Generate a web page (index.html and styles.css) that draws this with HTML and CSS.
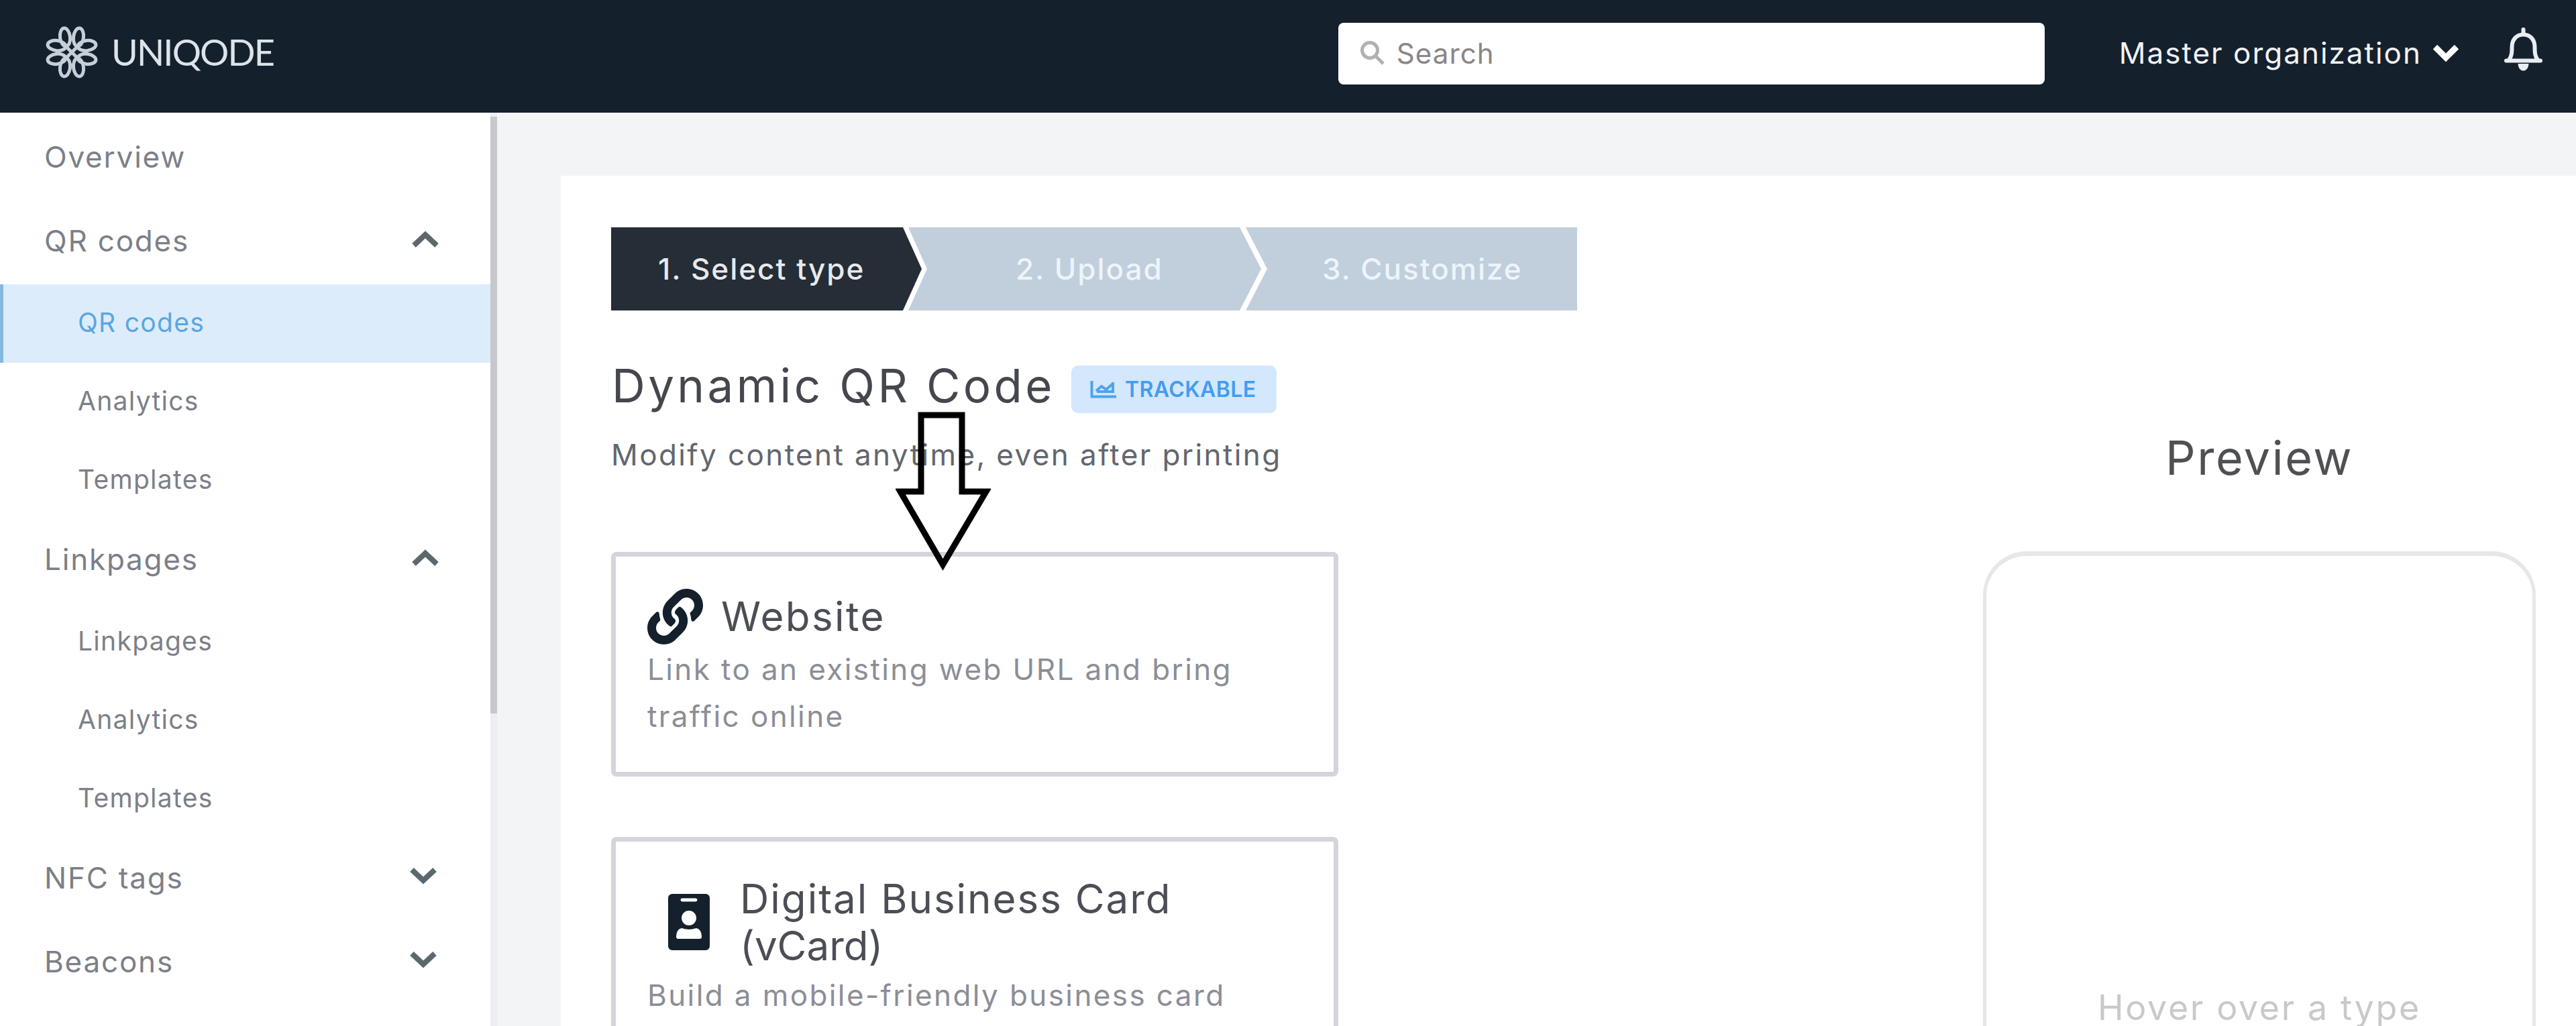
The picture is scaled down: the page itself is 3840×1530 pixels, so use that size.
FILE: index.html
```html
<!DOCTYPE html>
<html lang="en">
<head>
<meta charset="utf-8">
<title>Uniqode</title>
<link rel="stylesheet" href="styles.css">
</head>
<body>
<svg class="defs" aria-hidden="true">
  <symbol id="chevron-up" viewBox="0 0 42 28"><path d="M4 24 21 8l17 16"/></symbol>
  <symbol id="chevron-down" viewBox="0 0 42 28"><path d="M4 5l17 16L38 5"/></symbol>
</svg>

<header class="topbar">
  <a class="brand">
    <svg class="brand-mark" viewBox="-39 -39 78 78">
      <g id="petals">
        <ellipse cx="10" cy="-22.500" rx="7.500" ry="13.500" transform="rotate(7 10 -22.500)"/>
        <ellipse cx="-10" cy="-22.500" rx="7.500" ry="13.500" transform="rotate(-7 -10 -22.500)"/>
        <ellipse cx="10" cy="22.500" rx="7.500" ry="13.500" transform="rotate(-7 10 22.500)"/>
        <ellipse cx="-10" cy="22.500" rx="7.500" ry="13.500" transform="rotate(7 -10 22.500)"/>
      </g>
      <use href="#petals" transform="rotate(90)"/>
      <path d="M-12-12 12 12M-12 12 12-12"/>
    </svg>
    <span class="brand-name">UNIQODE</span>
  </a>
  <div class="search">
    <svg class="search-icon" viewBox="0 0 38 38"><circle cx="15" cy="15" r="11.5"/><path d="M23.500 23.500 35 35"/></svg>
    <span>Search</span>
  </div>
  <div class="org">
    <span>Master organization</span>
    <svg class="org-chevron" viewBox="0 0 40 28"><path d="M4 5l16 16L36 5"/></svg>
  </div>
  <svg class="bell" viewBox="0 0 57 66">
    <path class="bell-line" d="M7 48.500C11 43 11.500 38 11.500 29 11.500 18 18.500 10.500 28.500 10.500S45.500 18 45.500 29c0 9 .5 14 4.500 19.500"/>
    <path class="bell-line" d="M3 49.500h51M28.500 3v7"/>
    <path class="bell-fill" d="M20.500 54h16a8 10.500 0 0 1-16 0z"/>
  </svg>
</header>

<div class="shell">
  <nav class="sidebar">
    <a class="item">Overview</a>
    <a class="item">QR codes<svg class="chevron"><use href="#chevron-up"/></svg></a>
    <a class="sub active">QR codes</a>
    <a class="sub">Analytics</a>
    <a class="sub">Templates</a>
    <a class="item short">Linkpages<svg class="chevron"><use href="#chevron-up"/></svg></a>
    <a class="sub">Linkpages</a>
    <a class="sub">Analytics</a>
    <a class="sub">Templates</a>
    <a class="item short">NFC tags<svg class="chevron down"><use href="#chevron-down"/></svg></a>
    <a class="item">Beacons<svg class="chevron down"><use href="#chevron-down"/></svg></a>
  </nav>
  <div class="scrollbar"><div class="thumb"></div></div>

  <main class="panel">
    <section class="types">
      <div class="steps">
        <div class="step current">1. Select type</div>
        <div class="step second">2. Upload</div>
        <div class="step third">3. Customize</div>
      </div>

      <div class="heading">
        <h1>Dynamic QR Code</h1>
        <span class="badge">
          <svg class="badge-icon" viewBox="0 0 40 28"><path d="M2.500 1v23.500H39"/><path d="M9 16l8-7 7 5 11-10M34 3v14H10"/></svg>
          TRACKABLE
        </span>
      </div>
      <p class="lead">Modify content anytime, even after printing</p>

      <article class="card website">
        <div class="card-head">
          <svg class="link-icon" viewBox="0 0 512 512"><path d="M326.612 185.391c59.747 59.809 58.927 155.698.36 214.59-.11.12-.24.25-.36.37l-67.200 67.200c-59.270 59.270-155.699 59.262-214.960 0-59.270-59.260-59.270-155.700 0-214.960l37.106-37.106c9.840-9.840 26.786-3.300 27.294 10.606.648 17.722 3.826 35.527 9.690 52.721 1.986 5.822.567 12.262-3.783 16.612l-13.087 13.087c-28.026 28.026-28.905 73.660-1.155 101.960 28.024 28.579 74.086 28.749 102.325.51l67.200-67.190c28.191-28.191 28.073-73.757 0-101.830-3.701-3.694-7.429-6.564-10.341-8.569a16.037 16.037 0 0 1-6.947-12.606c-.396-10.567 3.348-21.456 11.698-29.806l21.054-21.055c5.521-5.521 14.182-6.199 20.584-1.731a152.482 152.482 0 0 1 20.522 17.197zM467.547 44.449c-59.261-59.262-155.690-59.270-214.960 0l-67.200 67.200c-.12.12-.25.25-.36.37-58.566 58.892-59.387 154.781.36 214.590a152.454 152.454 0 0 0 20.521 17.196c6.402 4.468 15.064 3.789 20.584-1.731l21.054-21.055c8.350-8.350 12.094-19.239 11.698-29.806a16.037 16.037 0 0 0-6.947-12.606c-2.912-2.005-6.640-4.875-10.341-8.569-28.073-28.073-28.191-73.639 0-101.830l67.200-67.190c28.239-28.239 74.300-28.069 102.325.51 27.750 28.300 26.872 73.934-1.155 101.960l-13.087 13.087c-4.350 4.350-5.769 10.790-3.783 16.612 5.864 17.194 9.042 34.999 9.690 52.721.509 13.906 17.454 20.446 27.294 10.606l37.106-37.106c59.271-59.259 59.271-155.699.001-214.959z"/></svg>
          <h2>Website</h2>
        </div>
        <p>Link to an existing web URL and bring<br>traffic online</p>
      </article>

      <article class="card vcard">
        <div class="card-head">
          <svg class="vcard-icon" viewBox="0 0 62 84">
            <path fill-rule="evenodd" d="M6 0h50a6 6 0 0 1 6 6v72a6 6 0 0 1-6 6H6a6 6 0 0 1-6-6V6a6 6 0 0 1 6-6zM21 6.500a2.500 2.500 0 0 0 0 5h20a2.500 2.500 0 0 0 0-5zM31 25a11 11 0 1 0 0 22 11 11 0 0 0 0-22zM20 51q-8 2-8 13 0 3 3 3h32q3 0 3-3 0-11-8-13-11 4-22 0z"/>
          </svg>
          <h2>Digital Business Card<br><span class="tight">(vCard)</span></h2>
        </div>
        <p>Build a mobile-friendly business card</p>
      </article>

      <svg class="pointer" viewBox="0 0 142 240">
        <path d="M38 5h61v114h36L70.500 228 7 119h31z"/>
      </svg>
    </section>

    <aside class="preview">
      <h2>Preview</h2>
      <div class="phone">Hover over a type</div>
    </aside>
  </main>
</div>
</body>
</html>
```
FILE: styles.css
```css
* { box-sizing: border-box; }

body {
  margin: 0;
  width: 3840px;
  height: 1530px;
  overflow: hidden;
  background: #f3f4f6;
  font-family: Inter, "Liberation Sans", sans-serif;
  font-size: 44px;
}

h1, h2, p { margin: 0; font-weight: 400; }
.defs { display: none; }

/* Top bar */
.topbar {
  display: flex;
  align-items: center;
  height: 168px;
  padding: 0 50px 8px 68px;
  background: #15202d;
  color: #f0f3f7;
}
.brand { display: flex; align-items: center; gap: 20px; }
.brand-mark {
  width: 78px;
  height: 78px;
  margin-bottom: 4px;
  fill: none;
  stroke: #c6ced8;
  stroke-width: 5;
}
.brand-name {
  margin-bottom: 4px;
  font-family: Lato, Inter, sans-serif;
  font-size: 54px;
  line-height: 64px;
  letter-spacing: -1.8px;
  color: #dde3ea;
}
.search {
  display: flex;
  align-items: center;
  gap: 17px;
  width: 1053px;
  height: 92px;
  margin-left: auto;
  padding: 0 0 2px 32px;
  border-radius: 8px;
  background: #fff;
  color: #8a8686;
  font-size: 42px;
  letter-spacing: 1.1px;
}
.search-icon { width: 38px; height: 38px; fill: none; stroke: #b3b0b3; stroke-width: 5; }
.org {
  display: flex;
  align-items: center;
  gap: 16px;
  margin: 0 0 3px 111px;
  letter-spacing: 2px;
}
.org-chevron { width: 40px; height: 28px; fill: none; stroke: #fff; stroke-width: 9; }
.bell { width: 57px; height: 66px; margin: 0 0 12px 67px; }
.bell-line { fill: none; stroke: #e8edf3; stroke-width: 6; stroke-linecap: round; }
.bell-fill { fill: #e8edf3; }

.shell { display: flex; align-items: flex-start; height: 1362px; }

/* Sidebar */
.sidebar {
  width: 731px;
  height: 1362px;
  padding-top: 6px;
  background: #fff;
  color: #7c7f88;
}
.item {
  display: flex;
  align-items: center;
  justify-content: space-between;
  height: 125px;
  padding: 0 76px 5px 66px;
  letter-spacing: 1.8px;
}
.item.short { height: 124px; padding-bottom: 6px; }
.sub {
  display: flex;
  align-items: center;
  height: 117px;
  padding: 0 0 5px 116px;
  font-size: 39px;
  letter-spacing: 1.3px;
}
.sub.active {
  padding-left: 111px;
  border-left: 5px solid #85b8dc;
  background: #dcecfb;
  color: #5aa6e2;
}
.chevron {
  width: 42px;
  height: 28px;
  margin-bottom: 6px;
  fill: none;
  stroke: #5c686e;
  stroke-width: 8;
}
.chevron.down { margin-right: 3px; }
.scrollbar { width: 10px; height: 1362px; padding-top: 6px; background: #edeef1; }
.thumb { height: 890px; background: #c6c8cd; }

/* Main panel */
.panel {
  display: flex;
  justify-content: space-between;
  flex: 1;
  height: 1268px;
  margin: 94px 0 0 95px;
  padding: 77px 60px 0 75px;
  background: #fff;
}
.types { position: relative; width: 1440px; }

.steps {
  display: flex;
  height: 124px;
  color: #edf4fb;
  font-weight: 500;
  letter-spacing: 2px;
}
.step { display: flex; align-items: center; background: #c1cedc; }
.step.current {
  width: 463px;
  padding-left: 70px;
  background: #252d36;
  color: #e6e9ec;
  clip-path: polygon(0 0, 435px 0, 100% 50%, 435px 100%, 0 100%);
}
.step.second {
  width: 529px;
  margin-left: -20px;
  padding-left: 160px;
  clip-path: polygon(0 0, 494px 0, 526px 50%, 494px 100%, 0 100%, 28px 50%);
}
.step.third {
  width: 494px;
  margin-left: -26px;
  padding-left: 114px;
  clip-path: polygon(0 0, 100% 0, 100% 100%, 0 100%, 32px 50%);
}

.heading {
  display: flex;
  align-items: flex-start;
  height: 72px;
  margin-top: 82px;
}
h1 {
  width: 686px;
  padding-left: 1px;
  color: #44474d;
  font-size: 69px;
  line-height: 60px;
  letter-spacing: 4.4px;
  white-space: nowrap;
}
.badge {
  display: flex;
  align-items: center;
  gap: 12px;
  width: 306px;
  height: 71px;
  padding-left: 28px;
  border-radius: 10px;
  background: #d3e8fc;
  color: #459cf0;
  font-size: 32px;
  font-weight: 600;
  letter-spacing: 0.4px;
}
.badge-icon { width: 40px; height: 28px; fill: none; stroke: #4ea3ee; stroke-width: 4; }
.lead {
  margin-top: 31px;
  color: #63666d;
  line-height: 60px;
  letter-spacing: 2.4px;
  white-space: nowrap;
}

.card {
  width: 1084px;
  height: 335px;
  margin-bottom: 90px;
  padding-left: 47px;
  border: 7px solid #d4d4dc;
  border-radius: 8px;
}
.card h2 {
  color: #4b4e55;
  font-size: 60px;
  line-height: 70px;
  letter-spacing: 2px;
}
.card p {
  color: #8c8e96;
  line-height: 70px;
  letter-spacing: 2.4px;
  white-space: nowrap;
}
.card-head { display: flex; align-items: center; }
.website { margin-top: 115px; padding-top: 47px; }
.website .card-head { height: 84px; gap: 27px; }
.website .card-head h2 { letter-spacing: 2.4px; }
.website p { margin-top: 2px; }
.link-icon { width: 83px; height: 83px; fill: #14202c; }
.vcard {
  height: 282px;
  margin-bottom: 0;
  padding-top: 50px;
  border-bottom: 0;
  border-radius: 8px 8px 0 0;
}
.vcard .card-head { padding-left: 31px; gap: 45px; }
.vcard p { margin-top: 4px; }
.vcard-icon { width: 62px; height: 84px; fill: #14202c; }
.card-head .tight { letter-spacing: 0; }

/* Arrow lying over the heading and the first card */
.pointer {
  position: absolute;
  left: 424px;
  top: 275px;
  width: 142px;
  height: 240px;
  fill: none;
  stroke: #000;
  stroke-width: 9;
}

.preview { width: 824px; padding-top: 304px; text-align: center; }
.preview h2 {
  color: #4e5054;
  font-size: 70px;
  line-height: 80px;
  letter-spacing: 2.5px;
}
.phone {
  height: 708px;
  margin-top: 99px;
  padding-top: 646px;
  border: solid #e7e7e8;
  border-width: 7px 5px 0;
  border-radius: 66px 66px 0 0;
  color: #c9c9cb;
  font-size: 52px;
  line-height: 55px;
  letter-spacing: 2.6px;
}
```
